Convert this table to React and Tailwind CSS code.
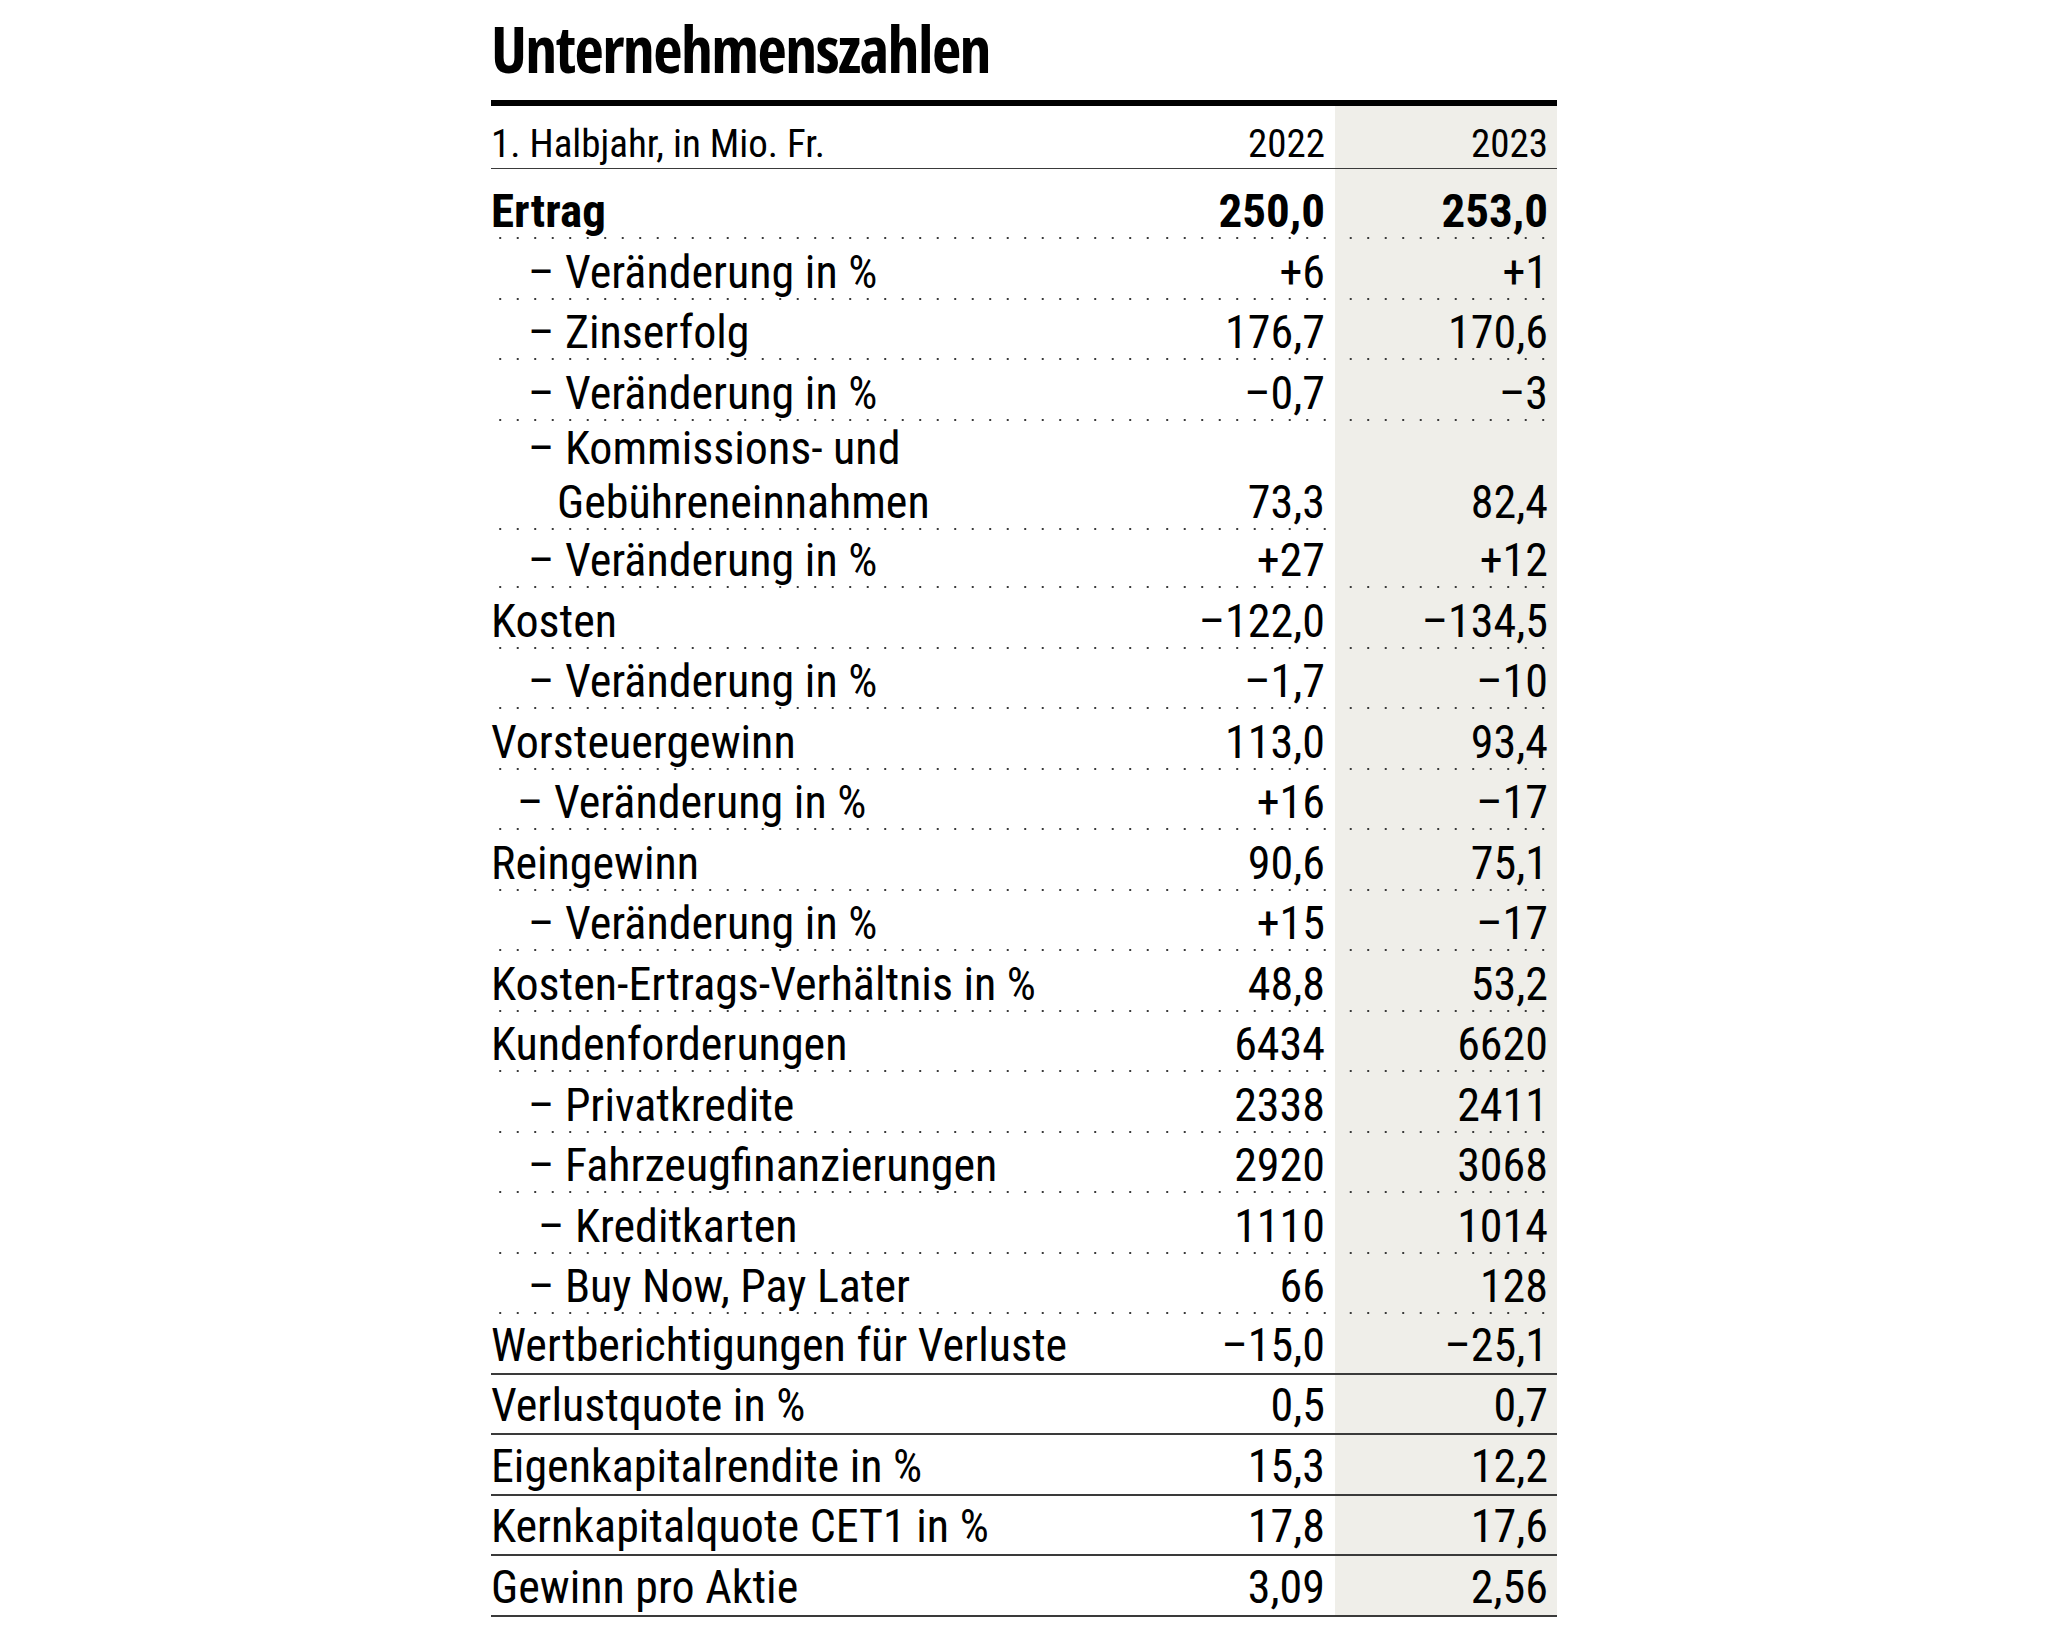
const rows = [
  { label: "– Veränderung in %", a: "+6", b: "+1", indent: "pl-[37px]" },
  { label: "– Zinserfolg", a: "176,7", b: "170,6", indent: "pl-[37px]" },
  { label: "– Veränderung in %", a: "–0,7", b: "–3", indent: "pl-[37px]" },
  { label: "– Kommissions- und", label2: "Gebühreneinnahmen", a: "73,3", b: "82,4", indent: "pl-[37px]" },
  { label: "– Veränderung in %", a: "+27", b: "+12", indent: "pl-[37px]" },
  { label: "Kosten", a: "–122,0", b: "–134,5" },
  { label: "– Veränderung in %", a: "–1,7", b: "–10", indent: "pl-[37px]" },
  { label: "Vorsteuergewinn", a: "113,0", b: "93,4" },
  { label: "– Veränderung in %", a: "+16", b: "–17", indent: "pl-[26px]" },
  { label: "Reingewinn", a: "90,6", b: "75,1" },
  { label: "– Veränderung in %", a: "+15", b: "–17", indent: "pl-[37px]" },
  { label: "Kosten-Ertrags-Verhältnis in %", a: "48,8", b: "53,2" },
  { label: "Kundenforderungen", a: "6434", b: "6620" },
  { label: "– Privatkredite", a: "2338", b: "2411", indent: "pl-[37px]" },
  { label: "– Fahrzeugfinanzierungen", a: "2920", b: "3068", indent: "pl-[37px]" },
  { label: "– Kreditkarten", a: "1110", b: "1014", indent: "pl-[47px]" },
  { label: "– Buy Now, Pay Later", a: "66", b: "128", indent: "pl-[37px]" },
  { label: "Wertberichtigungen für Verluste", a: "–15,0", b: "–25,1", solid: true },
  { label: "Verlustquote in %", a: "0,5", b: "0,7", solid: true },
  { label: "Eigenkapitalrendite in %", a: "15,3", b: "12,2", solid: true },
  { label: "Kernkapitalquote CET1 in %", a: "17,8", b: "17,6", solid: true },
  { label: "Gewinn pro Aktie", a: "3,09", b: "2,56", solid: true },
];

// dotted rule: 2px dots every 17.5px along the bottom of each cell
const dots =
  "bg-[linear-gradient(to_right,#3a3a3a_2px,transparent_2px)] bg-[length:17.5px_2px] bg-bottom bg-repeat-x";
const solidLine = "border-b-2 border-[#3a3a3a]";

function Row({ label, label2, a, b, indent = "", solid }) {
  const line = solid ? solidLine : dots;
  const h = label2 ? "h-[107px]" : "h-[60.5px]";
  return (
    <div className={`grid grid-cols-[1fr_180px_222px] ${h}`}>
      <div className={`flex items-end pb-[1px] ${indent} ${line}`}>
        {label2 ? (
          <div className="flex flex-col leading-[54px]">
            <span>{label}</span>
            <span className="pl-[29px]">{label2}</span>
          </div>
        ) : (
          <span>{label}</span>
        )}
      </div>
      <div className={`flex items-end justify-end pb-[1px] pr-[10px] ${line}`}>{a}</div>
      <div className={`flex items-end justify-end pb-[1px] pr-[9px] bg-[#efeee9] ${line}`}>{b}</div>
    </div>
  );
}

export default function App() {
  return (
    <div className="min-h-screen bg-white text-black font-['Roboto_Condensed','Roboto',sans-serif] flex justify-center">
      <div className="w-[1066px] pt-[17px] pb-[20px]">
        <h1 className="font-['Open_Sans',sans-serif] text-[64px] leading-[64px] font-bold font-stretch-[75%] tracking-[-1.6px]">
          Unternehmenszahlen
        </h1>
        <div className="h-[6px] bg-black mt-[19px]" />

        <div className="grid grid-cols-[1fr_180px_222px] h-[63px] border-b border-[#3a3a3a] text-[39px] leading-[40px]">
          <div className="flex items-end pb-[4px]">1. Halbjahr, in Mio. Fr.</div>
          <div className="flex items-end justify-end pb-[4px] pr-[10px]">2022</div>
          <div className="flex items-end justify-end pb-[4px] pr-[9px] bg-[#efeee9]">2023</div>
        </div>

        <div className="grid grid-cols-[1fr_180px_222px] h-[70px] text-[47px] leading-[46px] font-bold">
          <div className={`flex items-end pb-[5px] ${dots}`}>Ertrag</div>
          <div className={`flex items-end justify-end pb-[5px] pr-[10px] ${dots}`}>250,0</div>
          <div className={`flex items-end justify-end pb-[5px] pr-[9px] bg-[#efeee9] ${dots}`}>253,0</div>
        </div>

        <div className="text-[46px] leading-[53px]">
          {rows.map((r, i) => (
            <Row key={i} {...r} />
          ))}
        </div>
      </div>
    </div>
  );
}
